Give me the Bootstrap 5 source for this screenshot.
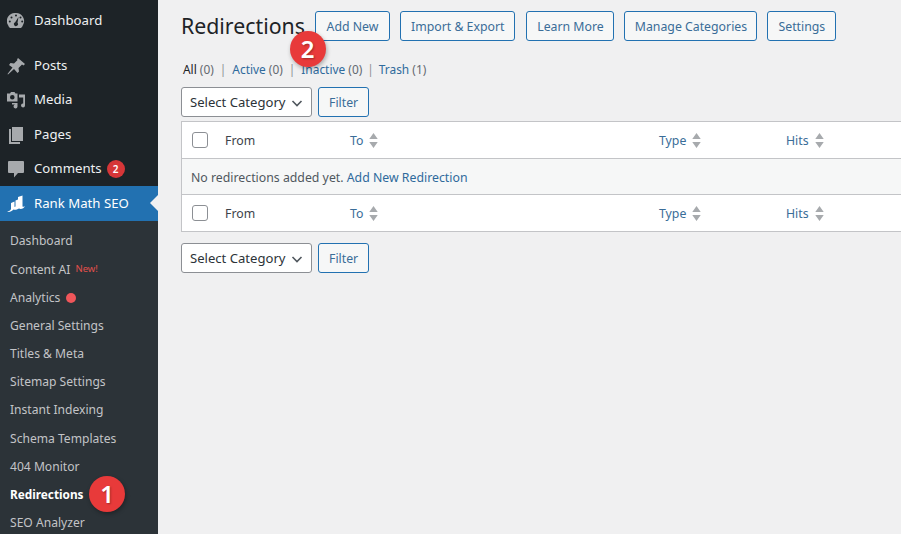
<!DOCTYPE html>
<html lang="en">
<head>
    <meta charset="UTF-8">
    <meta name="viewport" content="width=device-width, initial-scale=1.0">
    <title>Redirections</title>
    <link href="https://cdn.jsdelivr.net/npm/bootstrap@5.3.0/dist/css/bootstrap.min.css" rel="stylesheet">
    <style>
        html, body { height: 534px; overflow: hidden; }
        body { font-family: "Noto Sans", "Open Sans", sans-serif; font-size: 13px; background: #f0f0f1; color: #3c434a; }
        a { text-decoration: none; color: #2f6a9c; }
        .shell { height: 534px; position: relative; }
        .side { width: 158px; flex: none; background: #1d2327; color: #f0f0f1; font-size: 13.2px; overflow: hidden; padding-top: 3.4px; }
        .top-item { height: 34.4px; flex: none; padding-left: 7px; gap: 9px; color: #eef0f1; }
        .top-item svg { width: 18px; height: 18px; flex: none; fill: #a7aaad; }
        .gap-item { margin-top: 11px; }
        .top-item.on { background: #2271b1; color: #fff; position: relative; }
        .top-item.on svg { fill: #fff; }
        .top-item.on::after { content: ""; position: absolute; right: 0; top: 9px; border: 8px solid transparent; border-right-color: #f0f0f1; border-left-width: 0; }
        .count-dot { width: 18px; height: 18px; border-radius: 50%; background: #d63638; color: #fff; font-size: 10px; font-weight: 600; margin-left: -4px; }
        .sub { background: #2c3338; flex: 1; padding-top: 6.6px; }
        .sub a { height: 28.2px; flex: none; padding-left: 10px; color: #c3c4c7; font-size: 12.1px; }
        .sub a.cur { color: #fff; font-weight: 700; font-size: 11.8px; }
        .new-tag { color: #e2504c; font-size: 9.5px; margin-left: 5px; }
        .red-dot { width: 10px; height: 10px; border-radius: 50%; background: #f0565a; margin-left: 6px; }
        .main-area { flex: 1; min-width: 0; padding: 11px 0 0 23px; overflow: hidden; }
        .head-row { height: 30px; }
        .page-title { font-size: 21.3px; font-weight: 400; color: #1d2327; margin: 0 11px 0 0; line-height: 30px; width: 123px; flex: none; }
        .head-btns { gap: 10px; }
        .head-btns a:first-child { width: 75px; justify-content: center; }
        .head-btns a:nth-child(3) { margin-left: 1px; width: 88px; justify-content: center; }
        .head-btns a:nth-child(4) { width: 133px; justify-content: center; }
        .wp-btn { height: 30px; padding: 2px 10px 0; border: 1px solid #2271b1; border-radius: 3px; background: #f6f7f7; color: #3a6d98; font-size: 12.3px; line-height: 1; white-space: nowrap; }
        .views { margin: 18px 0 0 2px; height: 22px; font-size: 11.9px; color: #646970; }
        .views b { color: #1d2327; font-weight: 400; }
        .views i { font-style: normal; margin: 0 6px; color: #8c8f94; }
        .views i:last-of-type { margin: 0 5px; }
        .filter-row { height: 30px; gap: 6px; margin-top: 6px; }
        .cat-select { width: 131px; height: 30px; border: 1px solid #8c8f94; border-radius: 3px; background: #fff; padding: 2px 8px 0; color: #2c3338; font-size: 13.1px; white-space: nowrap; }
        .cat-select svg { width: 12px; height: 12px; flex: none; }
        .wp-table { width: 760px; margin-top: 4px; border: 1px solid #c3c4c7; }
        .t-row { height: 36px; background: #fff; font-size: 12.3px; }
        .t-row.msg { height: 37px; background: #f6f7f7; border-top: 1px solid #c3c4c7; border-bottom: 1px solid #c3c4c7; padding: 3px 0 0 9px; color: #50575e; }
        .t-check { width: 16px; height: 16px; border: 1px solid #8c8f94; border-radius: 3px; background: #fff; margin-left: 10px; flex: none; }
        .c-from { width: 125px; margin-left: 17px; flex: none; padding-top: 2px; }
        .c-to { width: 309px; flex: none; color: #3a6d98; padding-top: 2px; }
        .c-type { width: 127px; flex: none; color: #3a6d98; padding-top: 2px; }
        .c-hits { color: #3a6d98; padding-top: 2px; }
        .sorter { width: 9px; height: 15px; margin-left: 6px; fill: #a7aaad; vertical-align: -3px; }
        .step { position: absolute; width: 36px; height: 36px; border-radius: 50%; background: #e83a3a; color: #fff; font-size: 24px; font-weight: 600; text-shadow: 1px 1px 2px rgba(0,0,0,.3); box-shadow: 1px 2px 4px rgba(0,0,0,.3); }
        .step-1 { left: 89px; top: 476px; }
        .step-2 { left: 289.5px; top: 31px; }
    </style>
</head>
<body>
    <div class="shell d-flex">
        <div class="side d-flex flex-column">
            <a class="top-item d-flex align-items-center" href="#">
                <svg viewBox="0 0 18 18"><path fill-rule="evenodd" d="M9 1a8 8 0 0 1 7 12 7 7 0 0 1-2 3H3a7 7 0 0 1-2-3A8 8 0 0 1 9 1zM9 2.500a1 1 0 1 0 0 2 1 1 0 0 0 0-2zM4.500 4.500a1 1 0 1 0 0 2 1 1 0 0 0 0-2zM13.500 4.500a1 1 0 1 0 0 2 1 1 0 0 0 0-2zM2.800 8.500a1 1 0 1 0 0 2 1 1 0 0 0 0-2zM15.200 8.500a1 1 0 1 0 0 2 1 1 0 0 0 0-2zM11.500 5l-3.300 5.200a2 2 0 1 0 2.300.6z"/></svg>
                <span>Dashboard</span>
            </a>
            <a class="top-item gap-item d-flex align-items-center" href="#">
                <svg viewBox="0 0 18 18"><path d="M11 1l7 6-1.500 1.500-1.500-1-3.500 3.500.5 3.500-1.500 1.500-3.500-4-6 5.500-.5-.5 5-6.500-3.500-2.500L3.500 6l3.500.5L10.500 3 10 2.500z"/></svg>
                <span>Posts</span>
            </a>
            <a class="top-item d-flex align-items-center" href="#">
                <svg viewBox="0 0 18 18"><path fill-rule="evenodd" d="M0 2.500h3L4 1h3.500l1 1.500h2v8H0zM5.300 4a2.300 2.300 0 1 0 0 4.600 2.300 2.300 0 0 0 0-4.600z"/><path d="M12 3.500h6v11a2 2 0 1 1-1.800-2V6.500H12zM5 12h5.500v3.500a2 2 0 1 1-1.800-2V13.500H5z"/></svg>
                <span>Media</span>
            </a>
            <a class="top-item d-flex align-items-center" href="#">
                <svg viewBox="0 0 18 18"><path d="M5 1h11v14H5z"/><path d="M2 3h2v13h9v2H2z"/></svg>
                <span>Pages</span>
            </a>
            <a class="top-item d-flex align-items-center" href="#">
                <svg viewBox="0 0 18 18"><path d="M2 1h14a1 1 0 0 1 1 1v10a1 1 0 0 1-1 1h-5l-4 4.500V13H2a1 1 0 0 1-1-1V2a1 1 0 0 1 1-1z"/></svg>
                <span>Comments</span>
                <span class="count-dot d-flex align-items-center justify-content-center">2</span>
            </a>
            <a class="top-item on d-flex align-items-center" href="#">
                <svg viewBox="0 0 18 18"><path d="M0 16.500c2 0 3.500-1 4-2.500V8l3.500-1.500V12l1-.5v-6l2.500-1V2l4.500-1.500v11c1 .5 2 0 2.500-.5-1 2.500-4 3.500-6 2.500-2.500 1.500-4 1.500-5.500 1-2 2-4.500 3-6.500 2z"/></svg>
                <span>Rank Math SEO</span>
            </a>
            <div class="sub d-flex flex-column">
                <a class="d-flex align-items-center" href="#">Dashboard</a>
                <a class="d-flex align-items-center" href="#">Content AI <span class="new-tag">New!</span></a>
                <a class="d-flex align-items-center" href="#">Analytics <span class="red-dot"></span></a>
                <a class="d-flex align-items-center" href="#">General Settings</a>
                <a class="d-flex align-items-center" href="#">Titles &amp; Meta</a>
                <a class="d-flex align-items-center" href="#">Sitemap Settings</a>
                <a class="d-flex align-items-center" href="#">Instant Indexing</a>
                <a class="d-flex align-items-center" href="#">Schema Templates</a>
                <a class="d-flex align-items-center" href="#">404 Monitor</a>
                <a class="cur d-flex align-items-center" href="#">Redirections</a>
                <a class="d-flex align-items-center" href="#">SEO Analyzer</a>
            </div>
        </div>
        <div class="main-area">
            <div class="head-row d-flex align-items-center">
                <h1 class="page-title">Redirections</h1>
                <div class="head-btns d-flex">
                    <a class="wp-btn d-flex align-items-center" href="#">Add New</a>
                    <a class="wp-btn d-flex align-items-center" href="#">Import &amp; Export</a>
                    <a class="wp-btn d-flex align-items-center" href="#">Learn More</a>
                    <a class="wp-btn d-flex align-items-center" href="#">Manage Categories</a>
                    <a class="wp-btn d-flex align-items-center" href="#">Settings</a>
                </div>
            </div>
            <div class="views d-flex align-items-center">
                <b>All</b>&nbsp;(0)<i>|</i><a href="#">Active</a>&nbsp;(0)<i>|</i><a href="#">Inactive</a>&nbsp;(0)<i>|</i><a href="#">Trash</a>&nbsp;(1)
            </div>
            <div class="filter-row d-flex">
                <div class="cat-select d-flex align-items-center justify-content-between">
                    <span>Select Category</span>
                    <svg viewBox="0 0 12 12"><path d="M1.500 4l4.500 4.500L10.500 4" fill="none" stroke="#50575e" stroke-width="1.600"/></svg>
                </div>
                <a class="wp-btn d-flex align-items-center" href="#">Filter</a>
            </div>
            <div class="wp-table">
                <div class="t-row d-flex align-items-center">
                    <span class="t-check"></span>
                    <span class="c-from">From</span>
                    <span class="c-to">To<svg class="sorter" viewBox="0 0 9 16"><path d="M4.500 0L9 6.500H0zM0 9.500h9L4.500 16z"/></svg></span>
                    <span class="c-type">Type<svg class="sorter" viewBox="0 0 9 16"><path d="M4.500 0L9 6.500H0zM0 9.500h9L4.500 16z"/></svg></span>
                    <span class="c-hits">Hits<svg class="sorter" viewBox="0 0 9 16"><path d="M4.500 0L9 6.500H0zM0 9.500h9L4.500 16z"/></svg></span>
                </div>
                <div class="t-row msg d-flex align-items-center">No redirections added yet.&nbsp;<a href="#">Add New Redirection</a></div>
                <div class="t-row d-flex align-items-center">
                    <span class="t-check"></span>
                    <span class="c-from">From</span>
                    <span class="c-to">To<svg class="sorter" viewBox="0 0 9 16"><path d="M4.500 0L9 6.500H0zM0 9.500h9L4.500 16z"/></svg></span>
                    <span class="c-type">Type<svg class="sorter" viewBox="0 0 9 16"><path d="M4.500 0L9 6.500H0zM0 9.500h9L4.500 16z"/></svg></span>
                    <span class="c-hits">Hits<svg class="sorter" viewBox="0 0 9 16"><path d="M4.500 0L9 6.500H0zM0 9.500h9L4.500 16z"/></svg></span>
                </div>
            </div>
            <div class="filter-row d-flex" style="margin-top:11px">
                <div class="cat-select d-flex align-items-center justify-content-between">
                    <span>Select Category</span>
                    <svg viewBox="0 0 12 12"><path d="M1.500 4l4.500 4.500L10.500 4" fill="none" stroke="#50575e" stroke-width="1.600"/></svg>
                </div>
                <a class="wp-btn d-flex align-items-center" href="#">Filter</a>
            </div>
        </div>
        <div class="step step-1 d-flex align-items-center justify-content-center">1</div>
        <div class="step step-2 d-flex align-items-center justify-content-center">2</div>
    </div>
    <script src="https://cdn.jsdelivr.net/npm/bootstrap@5.3.0/dist/js/bootstrap.bundle.min.js"></script>
</body>
</html>
